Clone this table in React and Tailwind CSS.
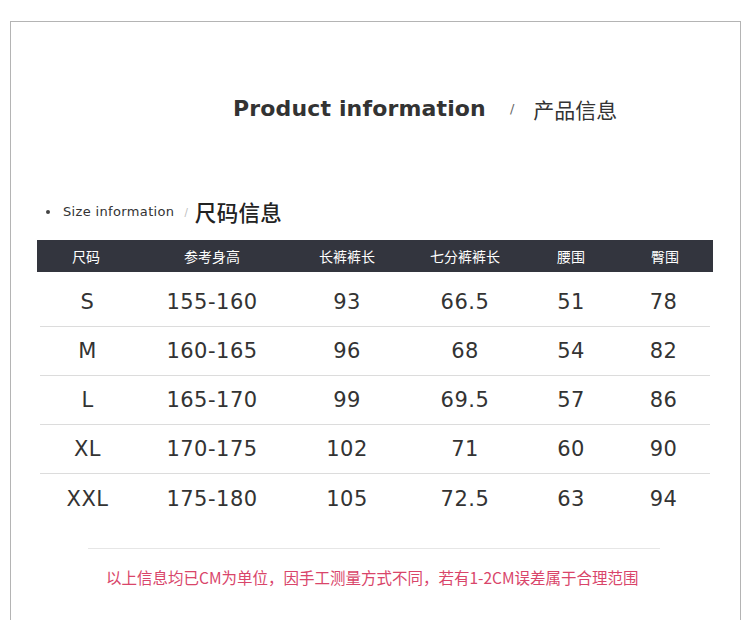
const rows = [
  ["S", "155-160", "93", "66.5", "51", "78"],
  ["M", "160-165", "96", "68", "54", "82"],
  ["L", "165-170", "99", "69.5", "57", "86"],
  ["XL", "170-175", "102", "71", "60", "90"],
  ["XXL", "175-180", "105", "72.5", "63", "94"],
];

const heads = ["尺码", "参考身高", "长裤裤长", "七分裤裤长", "腰围", "臀围"];

const cjk = { fontFamily: '"Noto Sans CJK SC", sans-serif' };
const dejavu = { fontFamily: '"DejaVu Sans", "Noto Sans CJK SC", sans-serif' };

function App() {
  return (
    <div className="w-[750px] h-[620px] bg-white overflow-hidden pt-[21px] pl-[10px]">
      <div className="w-[731px] h-[620px] border border-b-0 border-[#b4b4b4]">

        {/* Title */}
        <div className="flex items-center pl-[222px] pt-[72px] h-[102px]">
          <span className="text-[22px] font-bold text-[#333] leading-[30px] tracking-[0.15px]" style={dejavu}>
            Product information
          </span>
          <span className="ml-[24px] text-[13px] text-[#666]" style={dejavu}>/</span>
          <span className="ml-[19px] text-[21px] text-[#333] leading-[30px]" style={cjk}>
            产品信息
          </span>
        </div>

        {/* Size info label */}
        <div className="flex items-center mt-[74px] h-[28px] pl-[35px]">
          <span className="w-[4px] h-[4px] rounded-full bg-[#444]" />
          <span className="ml-[13px] text-[13px] text-[#333] tracking-[0.35px]" style={dejavu}>
            Size information
          </span>
          <span className="ml-[10px] text-[10px] text-[#bbb]" style={dejavu}>/</span>
          <span className="ml-[7px] text-[21.5px] text-[#222] leading-[28px] font-medium tracking-[0.3px]" style={cjk}>
            尺码信息
          </span>
        </div>

        {/* Table header */}
        <div className="ml-[26px] mt-[14px] w-[676px] h-[32px] bg-[#33353e] grid grid-cols-[98px_154px_116px_120px_92px_96px] items-center">
          {heads.map((h) => (
            <div key={h} className="text-center text-white text-[14px]" style={cjk}>
              {h}
            </div>
          ))}
        </div>

        {/* Table body */}
        <div className="ml-[29px] mt-[6px] w-[670px]">
          {rows.map((r, i) => (
            <div
              key={r[0]}
              className={
                "h-[49px] grid grid-cols-[95px_154px_116px_120px_92px_93px] items-center pt-[2px] " +
                (i < rows.length - 1 ? "border-b border-[#dcdcdc]" : "")
              }
            >
              {r.map((c, j) => (
                <div key={j} className="text-center text-[21px] text-[#333] tracking-[0.5px]" style={dejavu}>
                  {c}
                </div>
              ))}
            </div>
          ))}
        </div>

        {/* Divider */}
        <div className="ml-[77px] mt-[25px] w-[572px] h-px bg-[#e6e6e6]" />

        {/* Note */}
        <div className="ml-[95px] mt-[17px] text-[15.5px] leading-[22px] text-[#d9456a]" style={cjk}>
          以上信息均已CM为单位，因手工测量方式不同，若有1-2CM误差属于合理范围
        </div>
      </div>
    </div>
  );
}

export default App;
